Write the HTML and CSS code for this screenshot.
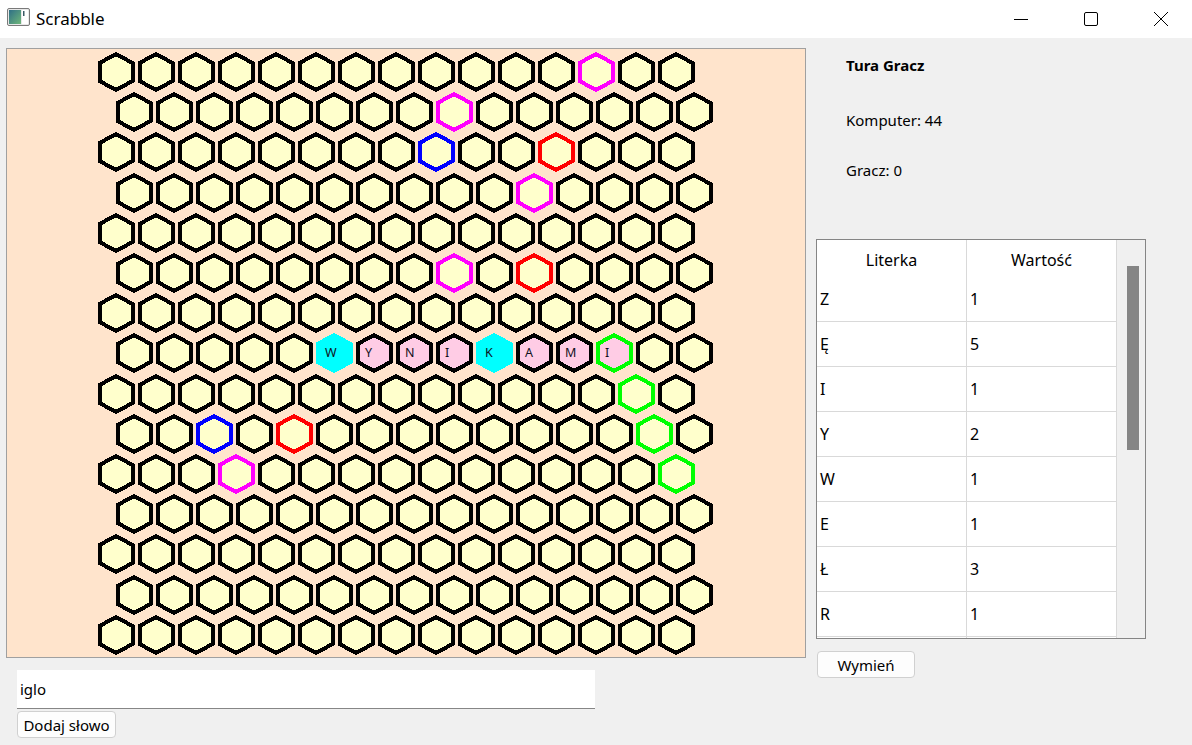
FILE: index.html
```html
<!DOCTYPE html>
<html lang="pl">
<head>
<meta charset="utf-8">
<title>Scrabble</title>
<link rel="stylesheet" href="styles.css">
</head>
<body>
<div class="window">
  <header class="titlebar">
    <div class="app-title">
      <svg class="app-icon" width="24" height="20" viewBox="0 0 24 20">
        <defs>
          <linearGradient id="ig" x1="0" y1="0" x2="1" y2="1">
            <stop offset="0" stop-color="#2f6f86"/>
            <stop offset="1" stop-color="#6fb77a"/>
          </linearGradient>
        </defs>
        <rect x="0.5" y="0.5" width="22" height="17" rx="1.5" fill="#e8e8e8" stroke="#7a7a7a"/>
        <rect x="2" y="2" width="12" height="14" fill="url(#ig)"/>
        <rect x="15" y="2" width="6" height="14" fill="#ffffff"/>
        <rect x="16" y="3" width="1.5" height="5" fill="#3a5a66"/>
      </svg>
      <span class="app-name">Scrabble</span>
    </div>
    <div class="win-controls">
      <span class="wc"><svg width="16" height="16" viewBox="0 0 16 16"><path d="M1 8.5h14" stroke="#000" stroke-width="1"/></svg></span>
      <span class="wc"><svg width="16" height="16" viewBox="0 0 16 16"><rect x="1.5" y="1.5" width="13" height="13" rx="1.5" fill="none" stroke="#000" stroke-width="1"/></svg></span>
      <span class="wc"><svg width="16" height="16" viewBox="0 0 16 16"><path d="M1 1L15 15M15 1L1 15" stroke="#000" stroke-width="1"/></svg></span>
    </div>
  </header>

  <main class="client">
    <section class="left">
      <div class="board">
        <svg id="board" class="board-svg" width="798" height="608" viewBox="0 0 798 608" shape-rendering="crispEdges"></svg>
      </div>
      <input class="word-input" type="text" value="iglo">
      <button class="btn add-btn">Dodaj słowo</button>
    </section>

    <aside class="right">
      <div class="status">
        <p class="turn">Tura Gracz</p>
        <p class="score score-cpu">Komputer: 44</p>
        <p class="score score-player">Gracz: 0</p>
      </div>

      <div class="table-wrap">
        <div class="letters">
          <div class="row head">
            <div class="cell">Literka</div>
            <div class="cell">Wartość</div>
          </div>
          <div class="row"><div class="cell">Z</div><div class="cell">1</div></div>
          <div class="row"><div class="cell">Ę</div><div class="cell">5</div></div>
          <div class="row"><div class="cell">I</div><div class="cell">1</div></div>
          <div class="row"><div class="cell">Y</div><div class="cell">2</div></div>
          <div class="row"><div class="cell">W</div><div class="cell">1</div></div>
          <div class="row"><div class="cell">E</div><div class="cell">1</div></div>
          <div class="row"><div class="cell">Ł</div><div class="cell">3</div></div>
          <div class="row"><div class="cell">R</div><div class="cell">1</div></div>
          <div class="row"><div class="cell"></div><div class="cell"></div></div>
        </div>
        <div class="scrollbar"><div class="thumb"></div></div>
      </div>

      <button class="btn swap-btn">Wymień</button>
    </aside>
  </main>
</div>
<script src="app.js"></script>
</body>
</html>
```

FILE: styles.css
```css
html, body {
  margin: 0;
  padding: 0;
}
body {
  background: #f0f0f0;
  font-family: "Noto Sans", "Open Sans", sans-serif;
  font-size: 15px;
  color: #000;
}
.window {
  width: 1192px;
  height: 745px;
  display: flex;
  flex-direction: column;
  overflow: hidden;
}

/* title bar */
.titlebar {
  flex: none;
  height: 38px;
  background: #ffffff;
  display: flex;
  align-items: center;
  justify-content: space-between;
}
.app-title {
  display: flex;
  align-items: center;
  gap: 5px;
  padding-left: 7px;
}
.app-icon {
  display: block;
  margin-top: -2px;
}
.app-name {
  font-size: 17px;
  line-height: 20px;
}
.win-controls {
  display: flex;
  height: 100%;
  margin-right: -4px;
}
.wc {
  width: 70px;
  height: 100%;
  display: flex;
  align-items: center;
  justify-content: center;
}
.wc svg {
  display: block;
}

/* client area */
.client {
  flex: 1;
  display: flex;
  gap: 10px;
  padding: 10px 0 0 6px;
}
.left {
  display: flex;
  flex-direction: column;
  align-items: flex-start;
}
.board {
  width: 800px;
  height: 610px;
  box-sizing: border-box;
  border: 1px solid #a0a0a0;
  background: #ffe4cc;
}
.board-svg {
  display: block;
}
.hex {
  fill: #ffffcc;
  stroke: #000;
  stroke-width: 4;
  stroke-linejoin: miter;
}
.hex-letter {
  font-family: "Noto Sans", "Open Sans", sans-serif;
  font-size: 12.5px;
  fill: #101020;
}

.word-input {
  margin: 12px 0 0 11px;
  width: 578px;
  height: 39px;
  box-sizing: border-box;
  border: none;
  border-bottom: 1px solid #868686;
  background: #ffffff;
  padding: 0 3px;
  font-family: inherit;
  font-size: 15px;
  color: #000;
  outline: none;
}
.btn {
  box-sizing: border-box;
  height: 27px;
  border: 1px solid #d0d0d0;
  border-radius: 4px;
  background: #fdfdfd;
  font-family: inherit;
  font-size: 15px;
  color: #000;
  padding: 0;
}
.add-btn {
  margin: 2px 0 0 11px;
  width: 99px;
}

/* right panel */
.right {
  width: 330px;
  display: flex;
  flex-direction: column;
  align-items: flex-start;
}
.status {
  padding-left: 30px;
}
.status p {
  margin: 0;
  line-height: 20px;
}
.turn {
  font-weight: bold;
  padding-top: 7px;
}
.score-cpu {
  padding-top: 35px;
}
.score-player {
  padding-top: 30px;
}
.table-wrap {
  margin-top: 59px;
  width: 330px;
  height: 400px;
  box-sizing: border-box;
  border: 1px solid #858585;
  background: #ffffff;
  display: flex;
  overflow: hidden;
}
.letters {
  width: 300px;
  flex: none;
  font-size: 16px;
}
.row {
  display: grid;
  grid-template-columns: 150px 150px;
}
.cell {
  box-sizing: border-box;
  height: 45px;
  border-right: 1px solid #d9d9d9;
  border-bottom: 1px solid #d9d9d9;
  padding: 0 3px;
  display: flex;
  align-items: center;
}
.head .cell {
  height: 37px;
  border-bottom: none;
  justify-content: center;
  padding-top: 2px;
}
.scrollbar {
  flex: 1;
  background: #f0f0f0;
  padding: 26px 0 0 10px;
}
.thumb {
  width: 12px;
  height: 184px;
  background: #858585;
}
.swap-btn {
  margin: 12px 0 0 1px;
  width: 98px;
}
```

FILE: app.js
```js
(function () {
  var NS = 'http://www.w3.org/2000/svg';
  var svg = document.getElementById('board');
  var PINK = '#ffcce5';
  var CYAN = '#00ffff';
  var special = {
    '0,12': { s: '#ff00ff' },
    '1,8': { s: '#ff00ff' },
    '2,8': { s: '#0000ff' },
    '2,11': { s: '#ff0000' },
    '3,10': { s: '#ff00ff' },
    '5,8': { s: '#ff00ff' },
    '5,10': { s: '#ff0000' },
    '7,5': { f: CYAN, s: CYAN, t: 'W' },
    '7,6': { f: PINK, t: 'Y' },
    '7,7': { f: PINK, t: 'N' },
    '7,8': { f: PINK, t: 'I' },
    '7,9': { f: CYAN, s: CYAN, t: 'K' },
    '7,10': { f: PINK, t: 'A' },
    '7,11': { f: PINK, t: 'M' },
    '7,12': { f: PINK, s: '#00ff00', t: 'I' },
    '8,13': { s: '#00ff00' },
    '9,2': { s: '#0000ff' },
    '9,4': { s: '#ff0000' },
    '9,13': { s: '#00ff00' },
    '10,3': { s: '#ff00ff' },
    '10,14': { s: '#00ff00' }
  };
  var W = 16.5, H = 18, S = 9;
  function pts(cx, cy) {
    return [
      [cx, cy - H], [cx + W, cy - S], [cx + W, cy + S],
      [cx, cy + H], [cx - W, cy + S], [cx - W, cy - S]
    ].map(function (p) { return p[0] + ',' + p[1]; }).join(' ');
  }
  for (var r = 0; r < 15; r++) {
    for (var c = 0; c < 15; c++) {
      var cx = 109 + 40 * c + (r % 2 ? 18 : 0);
      var cy = Math.round(23 + 40.2 * r);
      var poly = document.createElementNS(NS, 'polygon');
      poly.setAttribute('class', 'hex');
      poly.setAttribute('points', pts(cx, cy));
      var sp = special[r + ',' + c];
      if (sp) {
        if (sp.f) poly.style.fill = sp.f;
        if (sp.s) poly.style.stroke = sp.s;
      }
      svg.appendChild(poly);
      if (sp && sp.t) {
        var t = document.createElementNS(NS, 'text');
        t.setAttribute('class', 'hex-letter');
        t.setAttribute('x', cx - 9);
        t.setAttribute('y', cy + 4);
        t.textContent = sp.t;
        svg.appendChild(t);
      }
    }
  }
})();
```
